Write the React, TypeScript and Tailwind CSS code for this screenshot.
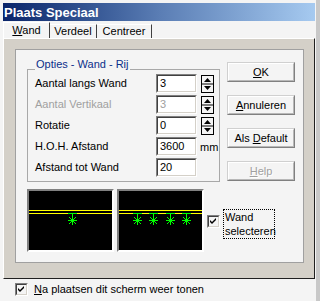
const font = "font-['Liberation_Sans',Arial,sans-serif]";

function Field({ value, disabled }: { value: string; disabled?: boolean }) {
  return (
    <div className="w-[41px] h-[19px] border border-t-[#808080] border-l-[#808080] border-b-white border-r-white">
      <div className="w-full h-full bg-white border border-t-[#404040] border-l-[#404040] border-b-[#d4d0c8] border-r-[#d4d0c8] pl-[2px] leading-[15px]">
        <span className={disabled ? "text-[#a0a0a0]" : "text-black"}>{value}</span>
      </div>
    </div>
  );
}

function Spinner() {
  return (
    <svg width="13" height="18" viewBox="0 0 13 18" className="ml-[4px]">
      <rect x="0.5" y="0.5" width="12" height="17" fill="#f4f4f4" stroke="#000" />
      <line x1="1" y1="9" x2="12" y2="9" stroke="#000" />
      <path d="M6.5 3 L10 7 L3 7 Z" fill="#000" />
      <path d="M3 11 L10 11 L6.5 15 Z" fill="#000" />
    </svg>
  );
}

function Row({
  label,
  value,
  disabled,
  spin,
  unit,
}: {
  label: string;
  value: string;
  disabled?: boolean;
  spin?: boolean;
  unit?: string;
}) {
  return (
    <div className="flex items-center h-[21px]">
      <div className={`w-[121px] ${disabled ? "text-[#a0a0a0]" : "text-black"}`}>{label}</div>
      <Field value={value} disabled={disabled} />
      {spin && <Spinner />}
      {unit && <span className="ml-[3px] mt-[2px]">{unit}</span>}
    </div>
  );
}

function Btn({ children, disabled }: { children: React.ReactNode; disabled?: boolean }) {
  return (
    <div className="w-[68px] h-[20px] border border-t-[#d0d0d0] border-l-[#d0d0d0] border-b-[#808080] border-r-[#808080] bg-[#f4f4f4]">
      <div
        className={`w-full h-full flex items-center justify-center border border-t-white border-l-white border-b-[#b8b8b8] border-r-[#b8b8b8] ${
          disabled ? "text-[#a0a0a0] [text-shadow:1px_1px_0_#ffffff]" : "text-black"
        }`}
      >
        {children}
      </div>
    </div>
  );
}

function Star({ cx, cy }: { cx: number; cy: number }) {
  return (
    <g stroke="#00ff00" strokeWidth="1" shapeRendering="crispEdges">
      <line x1={cx - 4} y1={22.5} x2={cx + 5} y2={22.5} />
      <line x1={cx + 0.5} y1={22} x2={cx + 0.5} y2={cy + 5} />
      <line x1={cx - 4} y1={cy + 0.5} x2={cx + 5} y2={cy + 0.5} />
      <line x1={cx - 3} y1={cy - 3} x2={cx + 4} y2={cy + 4} shapeRendering="auto" />
      <line x1={cx + 4} y1={cy - 3} x2={cx - 3} y2={cy + 4} shapeRendering="auto" />
    </g>
  );
}

function Preview({ stars }: { stars: number[] }) {
  return (
    <div className="w-[87px] h-[63px] border-2 border-t-[#808080] border-l-[#808080] border-b-white border-r-white bg-black">
      <svg width="83" height="59" viewBox="0 0 83 59" className="block">
        <line x1="0" y1="19.5" x2="83" y2="19.5" stroke="#ffff00" shapeRendering="crispEdges" />
        <line x1="0" y1="22.5" x2="83" y2="22.5" stroke="#ffff00" shapeRendering="crispEdges" />
        {stars.map((x) => (
          <Star key={x} cx={x} cy={29} />
        ))}
      </svg>
    </div>
  );
}

function Check() {
  return (
    <div className="w-[13px] h-[13px] border border-t-[#808080] border-l-[#808080] border-b-white border-r-white">
      <div className="w-full h-full bg-[#f4f4f4] border border-t-[#404040] border-l-[#404040] border-b-[#d4d0c8] border-r-[#d4d0c8]">
        <svg width="9" height="9" viewBox="0 0 9 9" className="block">
          <path d="M1 3 L3 5 L7 1 L7 3 L3 7 L1 5 Z" fill="#000" />
        </svg>
      </div>
    </div>
  );
}

export default function App() {
  return (
    <div className={`w-[320px] h-[301px] overflow-hidden bg-[#f4f4f4] ${font} text-[11px] text-black flex flex-col pl-[3px] pt-[3px] border-r-[4px] border-[#c8c8c8]`}>
      {/* title bar */}
      <div className="h-[18px] w-[312px] bg-linear-to-r from-[#0a246a] via-[#5a7db4] to-[#a6caf0] flex items-center pl-[1px]">
        <span className="text-white font-bold text-[13px] leading-none">Plaats Speciaal</span>
      </div>

      {/* tabs */}
      <div className="flex items-end h-[16px] mt-[1px]">
        <div className="h-[16px] w-[47px] border-t border-l border-t-white border-l-white border-r border-r-[#404040] flex items-center justify-center pb-[1px]">
          <span>
            <span className="underline">W</span>and
          </span>
        </div>
        <div className="h-[14px] w-[47px] border-t border-t-white border-r border-r-[#404040] flex items-center justify-center">
          Verdeel
        </div>
        <div className="h-[14px] w-[55px] border-t border-t-white border-r border-r-[#404040] flex items-center justify-center">
          Centreer
        </div>
      </div>

      {/* tab page */}
      <div className="h-[241px] w-[312px] bg-[#d4d0c8] border border-t-white border-l-white border-b-[#202020] border-r-[#202020] pl-[11px] pt-[10px]">
        <div className="h-[214px] w-[289px] bg-[#f4f4f4] border border-[#a0a0a0] pl-[11px] pt-[12px]">
          <div className="flex items-start">
            {/* group box */}
            <div className="w-[193px] h-[113px] border border-[#a8a8a8] mt-[7px] pl-[7px] pt-[3px]">
              <div className="-mt-[15px] mb-[2px] h-[13px] leading-[13px] w-fit px-[1px] bg-[#f4f4f4] text-[#0b2f8a]">
                Opties - Wand - Rij
              </div>
              <Row label="Aantal langs Wand" value="3" spin />
              <Row label="Aantal Vertikaal" value="3" disabled spin />
              <Row label="Rotatie" value="0" spin />
              <Row label="H.O.H. Afstand" value="3600" unit="mm" />
              <Row label="Afstand tot Wand" value="20" />
            </div>

            {/* buttons */}
            <div className="ml-[7px] flex flex-col gap-[13px]">
              <Btn>
                <span className="underline">O</span>K
              </Btn>
              <Btn>
                <span className="underline">A</span>nnuleren
              </Btn>
              <Btn>
                Als <span className="underline ml-[3px]">D</span>efault
              </Btn>
              <Btn disabled>
                <span className="underline">H</span>elp
              </Btn>
            </div>
          </div>

          {/* previews */}
          <div className="flex items-start mt-[7px]">
            <Preview stars={[43]} />
            <div className="ml-[3px]">
              <Preview stars={[18, 34, 51, 67]} />
            </div>
            <div className="ml-[3px] mt-[26px]">
              <Check />
            </div>
            <div className="ml-[3px] mt-[20px] border border-dotted border-black px-[1px] leading-[14px] w-[52px]">
              Wand
              <br />
              selecteren
            </div>
          </div>
        </div>
      </div>

      {/* bottom */}
      <div className="flex items-center h-[21px] pl-[12px]">
        <Check />
        <span className="ml-[6px]">
          <span className="underline">N</span>a plaatsen dit scherm weer tonen
        </span>
      </div>
    </div>
  );
}
